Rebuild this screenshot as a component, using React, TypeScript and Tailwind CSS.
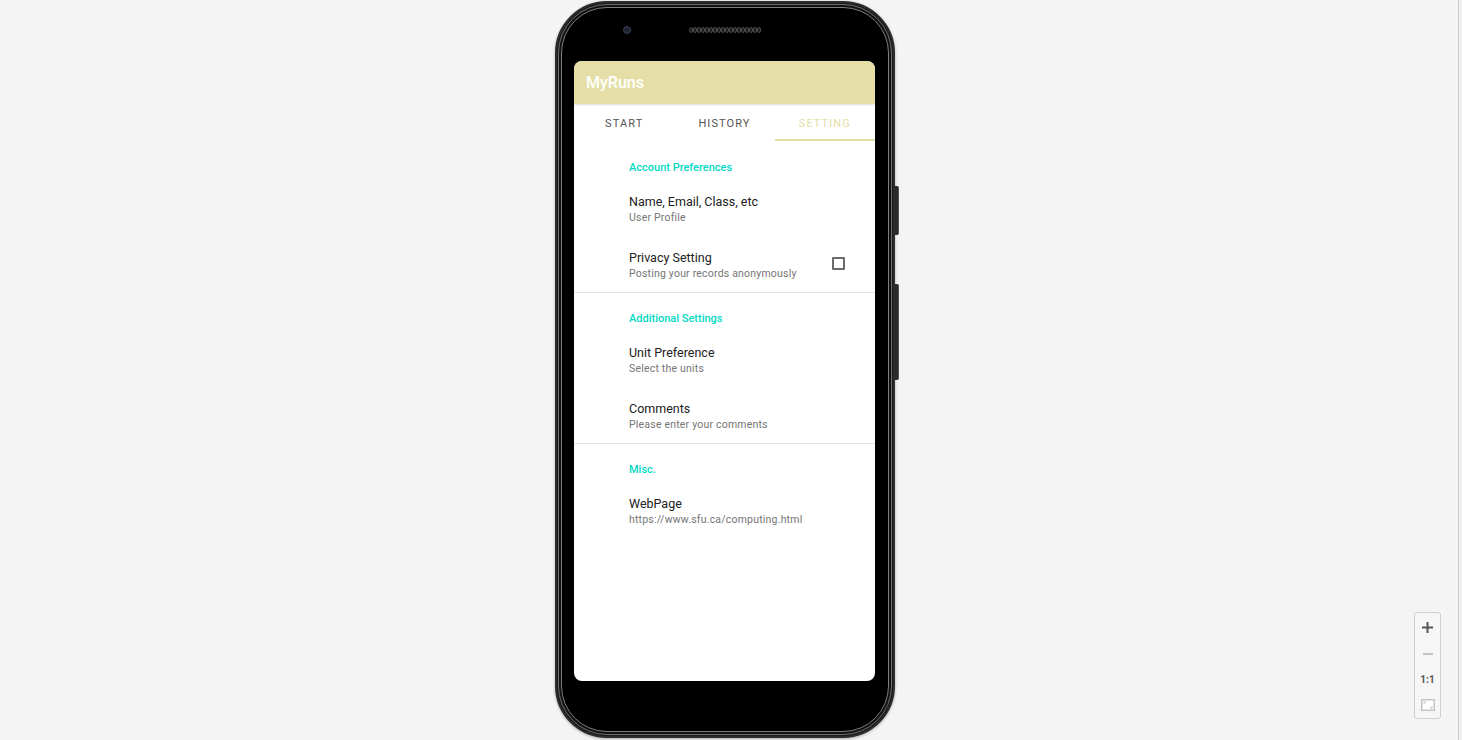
import React from 'react';

type Item = { title: string; summary: string; checkbox?: boolean };
type Section = { label: string; items: Item[] };

const sections: Section[] = [
  {
    label: 'Account Preferences',
    items: [
      { title: 'Name, Email, Class, etc', summary: 'User Profile' },
      { title: 'Privacy Setting', summary: 'Posting your records anonymously', checkbox: true },
    ],
  },
  {
    label: 'Additional Settings',
    items: [
      { title: 'Unit Preference', summary: 'Select the units' },
      { title: 'Comments', summary: 'Please enter your comments' },
    ],
  },
  {
    label: 'Misc.',
    items: [{ title: 'WebPage', summary: 'https://www.sfu.ca/computing.html' }],
  },
];

function PrefRow({ item }: { item: Item }) {
  return (
    <div className="flex items-center pl-[55px] pr-[30px] pt-[13px] pb-[11px]">
      <div className="flex-1">
        <div className="text-[12.5px] leading-[18px] text-[#212121]">{item.title}</div>
        <div className="text-[10.5px] leading-[14px] tracking-[0.2px] text-[#757575]">{item.summary}</div>
      </div>
      {item.checkbox && (
        <div className="w-[13px] h-[13px] border-2 border-[#6b6b6b] rounded-[1px] -mt-[3px]" />
      )}
    </div>
  );
}

function Screen() {
  const tabs = ['START', 'HISTORY', 'SETTING'];
  return (
    <div className="w-[301px] h-[620px] rounded-[8px] bg-white overflow-hidden flex flex-col">
      <div className="h-[43px] bg-[#e5dfa7] px-[12px] pt-[1px] flex items-center text-white text-[16px] font-medium shadow-[0_1px_2px_rgba(0,0,0,0.12)] z-10">
        MyRuns
      </div>
      <div className="h-[37px] flex">
        {tabs.map((t, i) => (
          <div
            key={t}
            className={
              i === 2
                ? 'flex-1 flex items-center justify-center pt-[5px] text-[11px] tracking-[0.1em] text-[#e5dfa7] border-b-2 border-[#e5dfa7]'
                : 'flex-1 flex items-center justify-center pt-[5px] text-[11px] tracking-[0.1em] text-[#555] border-b-2 border-transparent'
            }
          >
            {t}
          </div>
        ))}
      </div>
      <div className="flex flex-col">
        {sections.map((s, i) => (
          <div key={s.label} className={i > 0 ? 'border-t border-[#e2e2e2]' : ''}>
            <div
              className={
                i === 0
                  ? 'pl-[55px] pt-[20px] pb-[5px] text-[11px] leading-[14px] font-medium text-[#03dac5]'
                  : 'pl-[55px] pt-[19px] pb-[5px] text-[11px] leading-[14px] font-medium text-[#03dac5]'
              }
            >
              {s.label}
            </div>
            {s.items.map((it) => (
              <PrefRow key={it.title} item={it} />
            ))}
          </div>
        ))}
      </div>
    </div>
  );
}

function Phone() {
  const dots = Array.from({ length: 18 });
  return (
    <div className="relative w-[340px] h-[737px] rounded-[52px] bg-[#1b1b1b] border-2 border-[#2c2c2c] p-[1px] shadow-[0_1px_3px_rgba(0,0,0,0.3)]">
      <div className="absolute right-[-6px] top-[183px] w-[4px] h-[49px] rounded-r-[2px] bg-[#2a2a2a] border-r border-[#555]" />
      <div className="absolute right-[-6px] top-[281px] w-[4px] h-[96px] rounded-r-[2px] bg-[#2a2a2a] border-r border-[#555]" />
      <div className="h-full rounded-[49px] bg-[#111] border border-[#6e6e6e] p-[2px]">
        <div className="h-full rounded-[46px] bg-black border border-[#7e7e7e] pl-[12px] pr-[13px] flex flex-col">
          <div className="h-[53px] flex items-start">
            <div className="mt-[18px] h-[8px] flex items-center pl-[49px] gap-[58px]">
              <div className="w-[8px] h-[8px] rounded-full bg-[#1c2230] border border-[#3a4256]" />
              <div className="flex w-[73px] h-[6px] rounded-full overflow-hidden">
                {dots.map((_, k) => (
                  <div key={k} className="w-[4px] h-[6px] rounded-full border border-[#4a4a4a] bg-[#1e1e1e]" />
                ))}
              </div>
            </div>
          </div>
          <Screen />
        </div>
      </div>
    </div>
  );
}

function ZoomControls() {
  return (
    <div className="absolute left-[1414px] top-[612px] w-[27px] h-[107px] rounded-[3px] border border-[#cfcfcf] bg-[#f6f6f6] flex flex-col items-center pt-[2px]">
      <div className="h-[26px] flex items-center justify-center">
        <svg width="11" height="11" viewBox="0 0 11 11">
          <path d="M5.5 0v11M0 5.5h11" stroke="#555" strokeWidth="2" />
        </svg>
      </div>
      <div className="h-[26px] flex items-center justify-center">
        <div className="w-[10px] h-[2px] bg-[#c4c4c4]" />
      </div>
      <div className="h-[26px] flex items-center justify-center text-[10px] font-bold text-[#555]">1:1</div>
      <div className="h-[26px] flex items-center justify-center">
        <svg width="14" height="12" viewBox="0 0 14 12">
          <rect x="0.75" y="0.75" width="12.5" height="10.5" fill="#fff" stroke="#c4c4c4" strokeWidth="1.5" />
          <path d="M3 5V3h2M11 7v2H9" stroke="#c4c4c4" strokeWidth="1" fill="none" />
        </svg>
      </div>
    </div>
  );
}

export default function App() {
  return (
    <div className="relative h-[740px] w-full overflow-hidden bg-[#f4f4f4] font-['Roboto','Noto_Sans',sans-serif]">
      <div className="flex h-full pl-[555px] pt-[1px]">
        <Phone />
      </div>
      <ZoomControls />
      <div className="absolute right-0 top-0 h-full w-[4px] border-l border-[#cdcdcd] bg-[#efefef]" />
    </div>
  );
}
